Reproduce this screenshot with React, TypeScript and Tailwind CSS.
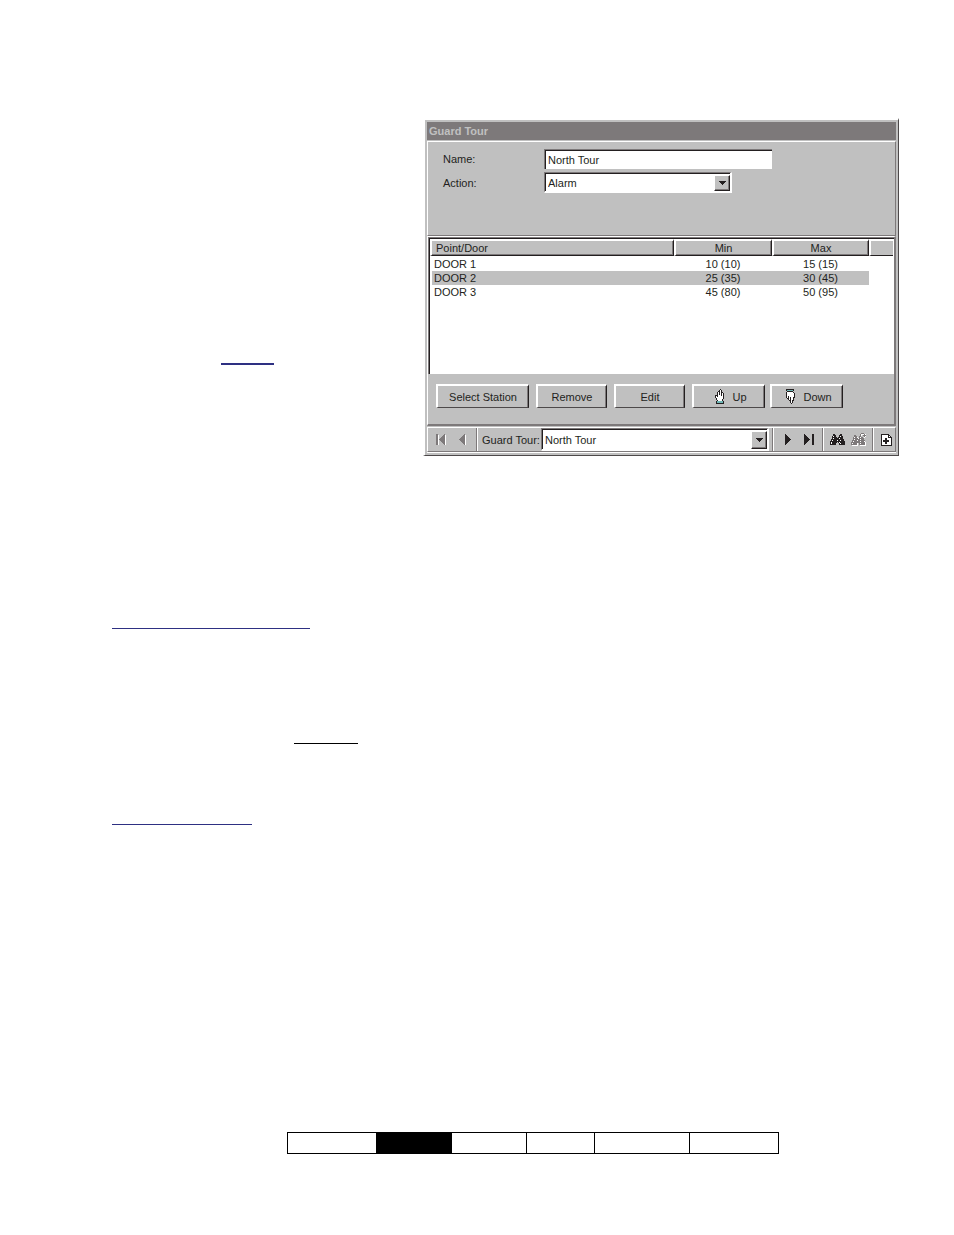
import { useState } from 'react';
import type { ReactNode } from 'react';

interface Stop {
  door: string;
  min: string;
  max: string;
}

const stops: Stop[] = [
  { door: 'DOOR 1', min: '10 (10)', max: '15 (15)' },
  { door: 'DOOR 2', min: '25 (35)', max: '30 (45)' },
  { door: 'DOOR 3', min: '45 (80)', max: '50 (95)' },
];

// One character per pixel
const palette: Record<string, string> = {
  k: '#231f20',
  g: '#7d797a',
  w: '#ffffff',
  c: '#6fb5b5',
};

const icons = {
  first: [
    'gg......g..',
    'ggw....ggw.',
    'ggw...gggw.',
    'ggw..ggggw.',
    'ggw.gggggw.',
    'ggwggggggw.',
    'ggw.gggggw.',
    'ggw..ggggw.',
    'ggw...gggw.',
    'ggw....ggw.',
    'ggw.....gw.',
  ],
  prev: [
    '.....g.',
    '....ggw',
    '...gggw',
    '..ggggw',
    '.gggggw',
    'ggggggw',
    '.gggggw',
    '..ggggw',
    '...gggw',
    '....ggw',
    '.....gw',
  ],
  next: [
    'k.....',
    'kk....',
    'kkk...',
    'kkkk..',
    'kkkkk.',
    'kkkkkk',
    'kkkkk.',
    'kkkk..',
    'kkk...',
    'kk....',
    'k.....',
  ],
  last: [
    'k.......kk',
    'kk......kk',
    'kkk.....kk',
    'kkkk....kk',
    'kkkkk...kk',
    'kkkkkk..kk',
    'kkkkk...kk',
    'kkkk....kk',
    'kkk.....kk',
    'kk......kk',
    'k.......kk',
  ],
  find: [
    '...kk.....kk...',
    '...kkk...kkk...',
    '..kwkk...kwkk..',
    '..kkkkk.kkkkk..',
    '..kwkkkkkwkkk..',
    '.kkkkkkkkkkkkk.',
    '.kwkkkkwkkwkkk.',
    'kkkkkkkkkkkkkkk',
    'kwkkkkk.kwkkkkk',
    'kwkkkk...kwkkkk',
    'kkkkkk...kkkkkk',
  ],
  findNext: [
    '..........ggg..',
    '.........gwwwgw',
    '...gg....gw.ggg',
    '...ggg..gg...gw',
    '..gwggw.gwgg.w.',
    '..gggggwggggg..',
    '..gwgggggwggg..',
    '.gggggwggggggg.',
    '.gwggggggwgggw.',
    'ggggggggggggggw',
    'gwggggw.gwggggw',
    'ggggggw.ggggggw',
    '.wwwwww..wwwwww',
  ],
  add: [
    'kkkkkkkk...',
    'kwwwwwwkk..',
    'kwwwwwwkwk.',
    'kwwwwwwkkkk',
    'kwwwkkwwwwk',
    'kwwwkkwwwwk',
    'kwkkkkkkwwk',
    'kwkkkkkkwwk',
    'kwwwkkwwwwk',
    'kwwwkkwwwwk',
    'kwwwwwwwwwk',
    'kkkkkkkkkkk',
  ],
  handUp: [
    '.....k...',
    '....kwk..',
    '...kkwk..',
    '..kwkwkk.',
    '..kwkwkwk',
    '..kwkwkwk',
    'kkkwwwkwk',
    'kwkwwwwwk',
    'kwwwwwwwk',
    '.kwwwwwwk',
    '.kwwwwwk.',
    '..kwwwwk.',
    '.kcccccck',
    '.kcccccck',
    '.kkkkkkkk',
  ],
  handDown: [
    'kkkkkkkk.',
    'kcccccck.',
    '.kkkkkk..',
    'kwwwwwwk.',
    'kwwwwwwwk',
    'kwwwwwwwk',
    'kwwwwwwwk',
    'kwkwwwwwk',
    'kwkwkwwkk',
    '.kkwkwwk.',
    '..kwkwwk.',
    '...kkwkk.',
    '....kwk..',
    '....kwk..',
    '.....k...',
  ],
  arrow: ['kkkkkkk', '.kkkkk.', '..kkk..', '...k...'],
};

function PixelIcon({ name }: { name: keyof typeof icons }) {
  const rows = icons[name];
  return (
    <svg width={rows[0].length} height={rows.length} shapeRendering="crispEdges" aria-hidden="true" className="shrink-0">
      {rows.flatMap((row, y) =>
        [...row].map((c, x) =>
          c === '.' ? null : <rect key={`${x}-${y}`} x={x} y={y} width={1} height={1} fill={palette[c]} />
        )
      )}
    </svg>
  );
}

function PushButton({ className, children }: { className: string; children: ReactNode }) {
  return (
    <button
      className={`flex h-6 items-center justify-center border-t-2 border-l-2 border-r border-b border-t-white border-l-white border-r-[#231f20] border-b-[#4d494a] shadow-[inset_-1px_0_0_#7d797a] ${className}`}
    >
      {children}
    </button>
  );
}

function ToolButton({ label, icon, className = 'w-[21px]' }: { label: string; icon: keyof typeof icons; className?: string }) {
  return (
    <button aria-label={label} className={`flex shrink-0 items-center justify-center ${className}`}>
      <PixelIcon name={icon} />
    </button>
  );
}

function Separator() {
  return <div className="mx-[3px] w-[2px] shrink-0 border-l border-r border-l-[#7d797a] border-r-white" />;
}

interface DropdownProps {
  id: string;
  options: string[];
  className: string;
}

function Dropdown({ id, options, className }: DropdownProps) {
  return (
    <div className={`relative border-t border-l border-r-2 border-b-2 border-t-[#7d797a] border-l-[#7d797a] border-r-white border-b-white ${className}`}>
      <select
        id={id}
        className="block h-full w-full appearance-none border-t border-l border-[#231f20] bg-white pl-[2px] outline-none"
      >
        {options.map((o) => (
          <option key={o}>{o}</option>
        ))}
      </select>
      <span className="pointer-events-none absolute top-[2px] right-0 bottom-0 flex w-4 items-center justify-center border-t border-l border-r border-b border-t-white border-l-white border-r-[#231f20] border-b-[#231f20] bg-[#c0c0c0] shadow-[inset_-1px_-1px_0_#7d797a]">
        <PixelIcon name="arrow" />
      </span>
    </div>
  );
}

function StopList() {
  const [selected, setSelected] = useState(1);
  const th =
    'h-[17px] border-t-2 border-l-2 border-r border-b border-t-white border-l-white border-r-[#231f20] border-b-[#231f20] bg-[#c0c0c0] p-0 font-normal shadow-[inset_-1px_-1px_0_#7d797a]';

  return (
    <div className="h-[137px] border-t border-l border-[#7d797a] bg-white">
      <div className="h-full border-t border-l border-[#231f20] pr-px">
        <table className="w-full table-fixed border-separate border-spacing-0 leading-[14px]">
          <thead>
            <tr>
              <th className={`${th} pl-1 text-left`}>Point/Door</th>
              <th className={`${th} w-[98px]`}>Min</th>
              <th className={`${th} w-[97px]`}>Max</th>
              <th className="w-6 border-t-2 border-l-2 border-b border-t-white border-l-white border-b-[#231f20] bg-[#c0c0c0] p-0" />
            </tr>
          </thead>
          <tbody>
            <tr className="h-px" />
            {stops.map((s, i) => {
              const bg = i === selected ? 'bg-[#c0c0c0]' : '';
              return (
                <tr key={s.door} onClick={() => setSelected(i)} className="h-[14px] text-center">
                  <td className={`border-l-2 border-white p-0 pl-[2px] text-left ${bg}`}>{s.door}</td>
                  <td className={`p-0 ${bg}`}>{s.min}</td>
                  <td className={`p-0 ${bg}`}>{s.max}</td>
                  <td className="p-0" />
                </tr>
              );
            })}
          </tbody>
        </table>
      </div>
    </div>
  );
}

function GuardTourWindow() {
  const [name, setName] = useState('North Tour');

  return (
    <section className="min-w-0 flex-1 border-t-2 border-l-2 border-r border-b border-t-white border-l-white border-r-[#4d494a] border-b-[#4d494a] bg-[#c0c0c0] p-[2px]">
      <h1 className="mb-px h-[18px] bg-[#7d797a] pl-[2px] text-[11px] leading-[18px] font-bold text-[#c0c0c0]">Guard Tour</h1>

      <div className="flex h-[95px] flex-col gap-[3px] border border-t-white border-r-[#7d797a] border-b-[#7d797a] border-l-white pt-[7px] pl-[15px]">
        <div className="flex h-5 items-center">
          <label htmlFor="tour-name" className="w-[101px]">Name:</label>
          <div className="h-full w-[228px] border-t border-l border-[#7d797a]">
            <input
              id="tour-name"
              value={name}
              onChange={(e) => setName(e.target.value)}
              className="block h-full w-full border-t border-l border-[#231f20] bg-white pl-[2px] outline-none"
            />
          </div>
        </div>
        <div className="flex h-[21px] items-center">
          <label htmlFor="tour-action" className="w-[101px]">Action:</label>
          <Dropdown id="tour-action" options={['Alarm']} className="h-full w-[188px]" />
        </div>
      </div>

      <div className="border-t border-l border-r-2 border-b-2 border-t-white border-r-[#7d797a] border-b-[#7d797a] border-l-white">
        <StopList />
        <div className="flex gap-[7px] pt-[10px] pb-4 pl-2">
          <PushButton className="w-[93px]">Select Station</PushButton>
          <PushButton className="w-[71px]">Remove</PushButton>
          <PushButton className="w-[71px]">Edit</PushButton>
          <div className="flex gap-[5px]">
            <PushButton className="w-[73px] gap-2 pl-1">
              <PixelIcon name="handUp" />
              Up
            </PushButton>
            <PushButton className="w-[73px] gap-2 pl-1">
              <PixelIcon name="handDown" />
              Down
            </PushButton>
          </div>
        </div>
      </div>

      <div className="mt-px flex h-[25px] border border-t-white border-r-[#7d797a] border-b-[#7d797a] border-l-white pl-[3px]">
        <ToolButton label="First" icon="first" />
        <ToolButton label="Previous" icon="prev" />
        <Separator />
        <label htmlFor="tour" className="w-[60px] shrink-0 self-center pl-px whitespace-nowrap">Guard Tour:</label>
        <Dropdown id="tour" options={['North Tour']} className="min-w-0 flex-1" />
        <Separator />
        <ToolButton label="Next" icon="next" />
        <ToolButton label="Last" icon="last" />
        <Separator />
        <ToolButton label="Find" icon="find" />
        <ToolButton label="Find next" icon="findNext" />
        <Separator />
        <ToolButton label="New" icon="add" className="w-[18px]" />
      </div>
      <div className="h-px bg-white" />
    </section>
  );
}

export default function App() {
  return (
    <main className="min-h-screen bg-white pt-[118px] pb-20 font-['Liberation_Sans',Arial,sans-serif] text-[11px] leading-[14px] text-[#231f20]">
      <div className="flex pr-[55px]">
        <div className="w-[423px] shrink-0 pt-[245px] pl-[221px]">
          <div className="h-[2px] w-[53px] bg-[#2e3082]" />
        </div>
        <GuardTourWindow />
      </div>

      <div className="pt-[172px] pl-[112px]">
        <div className="h-px w-[198px] bg-[#2e3082]" />
        <div className="mt-[114px] ml-[182px] h-px w-16 bg-black" />
        <div className="mt-20 h-px w-[140px] bg-[#2e3082]" />
      </div>

      <div className="mt-[307px] mr-[175px] ml-[287px] flex h-[22px] border border-black">
        <div className="w-[88px]" />
        <div className="w-[76px] bg-black" />
        <div className="w-[75px] border-r border-black" />
        <div className="w-[68px] border-r border-black" />
        <div className="w-[95px] border-r border-black" />
        <div className="flex-1" />
      </div>
    </main>
  );
}
